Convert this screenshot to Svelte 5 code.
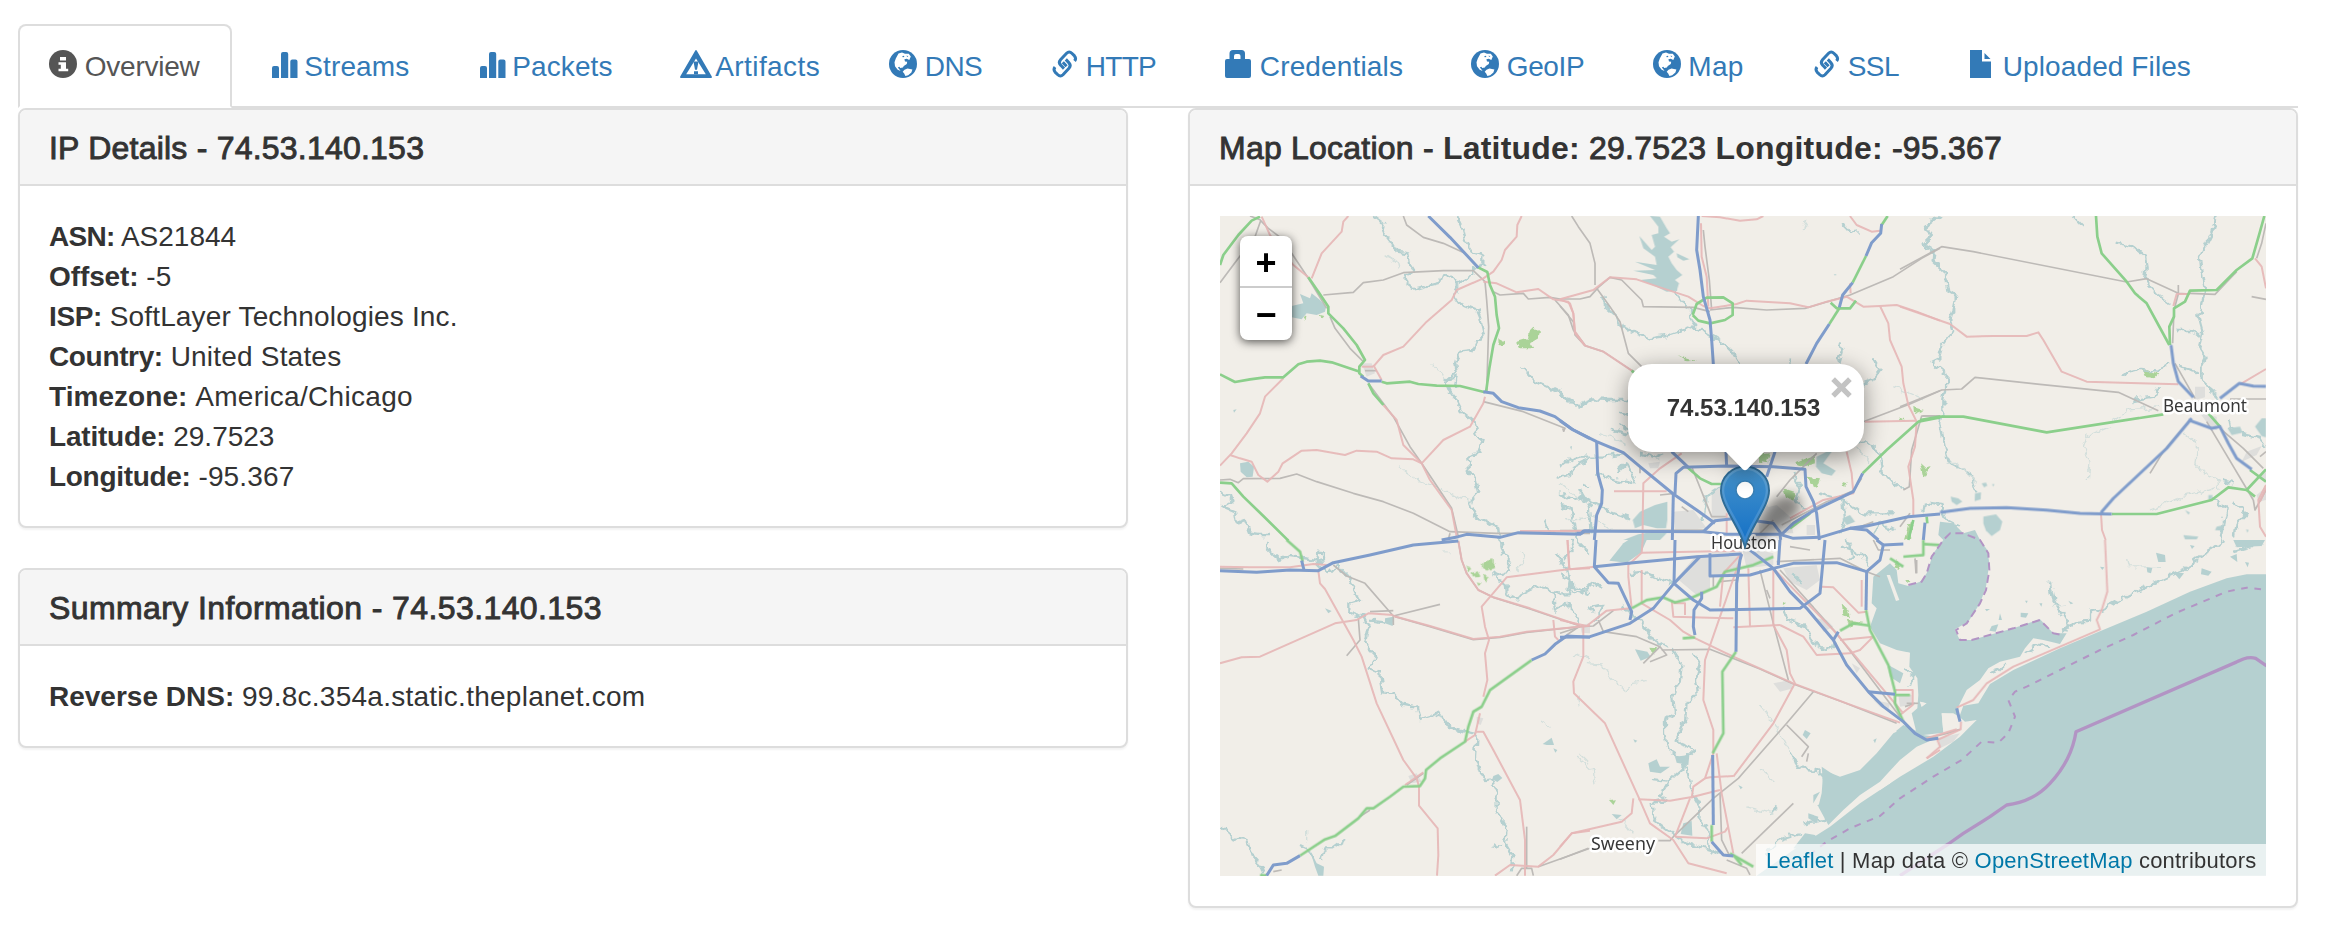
<script>
  const tabs = [
    { icon: 'info', label: 'Overview', width: 214, spacing: -0.25, active: true },
    { icon: 'stats', label: 'Streams', width: 204, spacing: 0.1 },
    { icon: 'stats', label: 'Packets', width: 199, spacing: 0.1 },
    { icon: 'warning', label: 'Artifacts', width: 205.5, spacing: 0.4 },
    { icon: 'globe', label: 'DNS', width: 157, spacing: -0.6 },
    { icon: 'link', label: 'HTTP', width: 170, spacing: -0.7 },
    { icon: 'lock', label: 'Credentials', width: 243, spacing: 0.15 },
    { icon: 'globe', label: 'GeoIP', width: 177.5, spacing: -0.4 },
    { icon: 'globe', label: 'Map', width: 155.5, spacing: 0.3 },
    { icon: 'link', label: 'SSL', width: 151, spacing: -0.6 },
    { icon: 'file', label: 'Uploaded Files', width: 290, spacing: 0.1 },
  ];

  // name, value, letter spacing of the name, letter spacing of the value
  const details = [
    ['ASN:', 'AS21844', -0.7, 0],
    ['Offset:', '-5', -0.1, 0],
    ['ISP:', 'SoftLayer Technologies Inc.', -0.4, 0.17],
    ['Country:', 'United States', -0.35, 0.2],
    ['Timezone:', 'America/Chicago', 0.05, 0.3],
    ['Latitude:', '29.7523', -0.2, 0],
    ['Longitude:', '-95.367', -0.3, 0.15],
  ];

  // Map geometry is split in tiles; each tile has its own origin and a 3x grid.
  const origin = { A: [1210, 200], B: [1560, 200], C: [1900, 200], D: [1210, 540], E: [1560, 540], F: [1900, 540] };
  const at = (t) => `translate(${origin[t][0]} ${origin[t][1]}) scale(.33333)`;

  const urban = {
    A: ['455,490 485,490 495,520 470,530'],
    B: ['340,935 400,930 440,985 345,992', '455,870 500,850 600,860 640,960 455,960', '590,930 650,915 690,950 700,1000 600,1000', '740,975 765,975 765,1005 740,1005', '265,790 300,785 295,805 270,805'],
    C: ['885,560 915,560 915,592 885,600', '900,640 950,650 950,690 930,680', '1040,755 1085,738 1070,765 1025,785', '1075,830 1098,815 1098,845', '1070,885 1098,860 1098,900 1075,905'],
    D: ['595,708 620,700 635,725 605,730', '800,530 820,535 812,555 800,550', '1110,255 1140,250 1140,280 1115,278'],
    E: ['350,115 410,45 450,50 450,150 410,165', '455,35 545,35 530,105 455,105', '545,20 640,40 640,75 560,85', '670,85 770,75 780,120 740,150 690,125', '640,430 690,420 700,445 660,455', '940,480 990,490 985,510 960,500', '1015,465 1055,465 1055,495 1020,500', '770,235 800,240 820,260 790,275', '875,370 900,385 890,400'],
    F: ['115,595 180,580 160,605 120,625'],
  };

  const wood = {
    A: ['920,425 955,415 955,395 970,380 990,398 985,415 960,430 970,445 930,445', '865,415 885,425 880,437 866,435', '320,340 340,345 335,352', '280,352 290,345 286,362'],
    B: ['705,790 760,768 765,790 730,800', '670,868 708,880 700,902 678,890', '740,830 780,835 770,862 750,850', '590,765 630,760 620,790 600,785', '1080,790 1095,803 1112,798 1090,835 1085,812', '1060,620 1092,630 1062,642', '845,845 860,850 850,860', '1018,652 1035,660 1022,662', '350,465 385,478 415,482 380,484'],
    C: ['725,508 750,513 775,520 760,535 735,530', '25,975 45,960 30,1015 12,1020'],
    D: ['820,65 850,58 855,85 830,92 815,80', '785,100 802,93 812,110 788,112', '820,105 840,110 825,128', '770,80 785,85 775,95', '800,125 815,128 805,138'],
    E: ['268,320 295,322 280,348', '150,780 168,778 160,792', '845,190 865,210 870,235 850,225', '1010,60 1020,90 1000,85', '670,185 680,190 672,195', '860,240 910,245 870,262'],
    F: ['15,120 32,120 28,130'],
  };

  const water = {
    A: ['245,318 280,310 270,282 300,295 305,280 330,300 348,320 345,335 320,345 290,340 275,358 245,352', '90,790 115,785 132,800 128,830 110,832 92,815', '70,630 80,628 72,638', '1080,740 1086,738 1084,750'],
    B: ['270,48 300,50 320,85 330,100 312,110 335,125 358,118 332,142 342,155 325,170 335,190 350,210 367,225 345,240 357,250 350,272 320,275 285,258 240,240 290,235 280,225 220,212 285,210 225,185 290,195 285,170 250,145 238,108 275,150 285,140 275,105 295,100 295,80', '350,160 388,178 370,182 352,172', '770,770 800,755 815,755 790,790 827,812 815,827 785,820 768,800', '240,935 285,915 322,905 322,960 318,985 290,985 250,975 225,985 218,960', '235,1003 280,995 320,1000 300,1020 190,1020', '848,955 870,945 885,965 860,975', '822,222 828,222 826,228'],
    C: ['1065,680 1085,655 1098,655 1098,712 1085,708', '250,950 288,943 307,965 300,990 275,1008 258,992 250,970', '152,890 175,895 187,905 170,915 155,905', '225,880 243,877 242,898 224,903', '245,850 258,848 262,857 252,862', '276,852 283,852 280,860', '983,685 1020,680 1028,698 995,705', '855,930 870,938 865,944', '950,980 972,975 965,992 945,990', '925,885 938,885 934,900 925,898', '850,1005 895,1010 890,1018 855,1018', '1038,988 1046,990 1042,998'],
    D: ['300,930 320,970 342,980 340,1007 325,1007 315,980', '525,235 550,230 548,258 525,250', '850,708 865,702 877,714 862,726 847,718', '998,612 1025,593 1032,615 1010,615', '1030,625 1042,630 1036,638', '345,205 365,213 355,220'],
    E: ['148,62 190,10 205,0 260,0 243,38 200,68', '265,670 290,658 300,680 330,680 302,700 270,695', '345,650 388,645 385,675 350,668', '370,850 395,843 397,887 362,882', '225,328 262,335 272,350 242,362', '735,570 752,580 740,597 728,585', '785,680 830,710 860,715 840,750 790,740', '745,820 775,830 770,850 745,835', '700,925 735,880 765,885 775,900 735,930', '535,735 548,742 542,748', '155,822 185,825 170,838', '220,598 232,602 225,608', '985,375 1030,400 1020,430 990,410', '940,600 950,595 945,610', '760,765 780,755 760,790'],
    F: [
      '-10,90 -30,70 -80,110 -85,190 -70,205 -90,260 -60,310 -10,330 30,338 28,380 52,415 55,465 52,505 35,520 48,572 10,555 -20,580 -70,640 -120,690 -180,710 -230,690 -235,760 -245,800 -215,855 -170,810 -120,765 -60,725 0,660 50,620 115,592 70,585 130,578 125,520 160,520 178,530 175,500 200,450 240,420 265,385 300,365 360,350 375,325 400,295 430,300 480,312 500,280 460,280 420,238 340,265 215,300 180,300 165,268 205,245 240,190 258,140 268,70 262,30 240,0 225,-30 190,-20 160,-50 120,-55 115,-15 130,0 100,40 80,100 60,125 25,138 -5,130',
      '1098,103 1040,103 980,115 870,155 740,215 600,274 480,325 340,390 270,432 235,490 190,497 178,530 195,545 230,540 180,590 100,650 0,710 -120,790 -210,860 -320,930 -430,1007 1098,1007',
      '768,38 795,45 797,66 775,66', '740,82 757,84 753,100 742,97', '905,85 935,95 925,107 903,103', '820,95 852,100 838,118', '1000,0 1095,0 1085,18 1010,22', '990,50 1010,42 1012,66', '1035,66 1047,68 1043,82', '275,258 295,253 287,275 268,272', '362,218 385,220 378,233 362,231', '300,220 306,240 296,240', '870,15 884,18 876,27', '375,182 383,182 380,190', '418,190 427,190 424,200', '255,207 270,207 260,214', '600,80 613,82 607,90', '505,182 520,190 512,193',
    ],
  };

  const islands = {
    E: ['980,105 990,105 1018,180 1008,183', '1080,485 1098,490 1085,500', '1000,560 1010,575 998,580'],
    F: ['0,335 28,338 12,372 2,350', '125,520 160,522 175,545 178,565 130,575', '60,485 80,490 65,500', '-60,750 -30,730 0,700 -40,715 -80,745', '165,270 185,275 200,300 180,300'],
  };

  const rivers = {
    A: ['490,48 520,70 515,90 545,130 560,155 595,160 600,190 612,210 580,225 590,250 615,268 650,258 690,248 700,220 730,235 745,255 735,290 750,310 800,330 810,355 820,400 800,430 790,450 745,455 735,490 740,515 705,545 715,570 740,600 760,640 790,665 800,700 815,720 805,760 775,770 780,800 770,810 795,840 805,880 780,910 795,945 830,965 865,985 868,1020', '740,48 760,90 770,130 790,160 820,170 820,195 790,205 790,225 745,250', '938,502 975,545 1040,575 1080,600 1105,620 1140,605', '1140,775 1090,800 1080,825 1040,830', '1050,915 1080,920 1095,980', '30,878 60,890 65,905 40,920 75,935 80,970 105,960 120,1000 150,1005 180,1005', '1000,955 1010,985 1030,1000', '1115,855 1140,860', '1110,880 1125,905 1140,905', '705,545 740,530 735,560'],
    B: ['130,290 135,315 175,350 185,380 220,395 270,415 320,408 400,380 440,400 490,430 520,460 540,492', '340,270 370,310 390,320 390,350 410,380', '0,572 30,610 60,612 100,598 150,600 205,600', '1140,50 1095,85 1115,105 1090,130 1125,150 1120,180 1140,200', '850,75 870,98 893,95', '838,430 845,450 835,485', '940,475 962,510 940,540 915,550', '900,720 940,735 960,765 965,810 1000,850 1040,870', '0,800 30,780 60,770 130,770 190,760', '0,880 40,900 60,890 150,935 210,955', '115,820 170,840 220,850', '60,870 90,920 95,1000', '700,820 720,860 710,900 740,930', '480,860 440,890 430,960', '780,880 850,900 900,940 1000,940', '180,635 205,645', '180,675 205,690', '150,690 205,705', '850,900 855,960 840,1000', '940,1000 960,970 1000,990', '0,915 30,930 45,970 50,1020', '240,760 290,775 310,765', '230,850 200,790 170,820', '690,475 688,492'],
    C: ['120,48 75,80 95,105 65,135 100,155 98,185 130,215 140,240 145,270 170,285 160,330 150,365 160,395 125,440 115,475 95,485 140,520 138,560 130,600 130,640 120,670 130,720 140,770 150,790 210,820 230,880', '950,48 935,100 900,170 905,220 915,270 905,320 895,345 910,400 900,440 920,470 905,500 905,545 940,575 955,600', '650,128 700,140 735,170 740,200 735,240 770,280 810,310', '830,390 870,390 900,410', '835,500 895,515', '810,490 770,515 720,510 665,525', '780,560 760,590 700,600', '985,655 990,680 1020,700 1080,715 1098,740', '935,890 980,930 960,1020', '70,940 75,910 120,915 140,960 180,980', '520,48 545,75', '1000,900 1040,940 1010,970 1005,1010', '965,840 1000,850'],
    D: ['175,0 165,20 190,45 205,58 240,48 320,60 325,38 345,40 345,60 320,65 340,85 350,105 380,75 415,115 450,185 415,195 415,215 460,230 475,260 465,310 500,350 475,385 510,400 520,460 550,465 570,490 620,500 630,540 690,520 715,560 760,575 800,585 795,650 810,700 860,740 860,810 890,870 885,910 910,950 905,1000', '870,0 880,40 900,70 895,95 850,105 860,120 885,125 890,160 920,172 960,150 1000,135 1030,160 1080,160 1090,140 1140,160', '1040,45 1075,90 1085,150', '1030,160 1035,215 1060,185 1090,210 1110,250', '30,858 70,895 110,900 130,950 150,975 160,1007', '405,900 370,925 345,925 335,960', '270,915 300,930 310,960', '1100,0 1140,40', '480,245 525,250', '850,915 870,920'],
    E: ['340,330 365,370 360,420 340,470 345,520 315,540 315,580 325,630 370,660 375,680 330,720 300,770 320,780 275,790 280,840 340,885 380,910 450,930 480,945', '400,340 420,370 405,420 410,460 380,490 375,540 350,600 400,635 370,660', '380,680 390,740 420,790 415,830 445,870 450,930', '0,100 30,120 25,150 60,160 100,125 130,140', '100,220 90,200 130,195 120,220 100,245', '185,200 240,240 270,290 320,320', '690,640 720,685 770,690 800,720', '670,200 680,240 740,260 760,310 800,330 830,310', '210,105 260,100 330,130', '30,0 35,30 10,60', '275,720 320,725', '630,820 650,800', '860,0 880,50 860,60', '770,790 800,820 790,840 730,850', '840,20 900,40 930,80', '620,940 660,900 720,880', '700,100 730,130'],
    F: ['450,130 460,180 510,265', '970,0 850,90 720,150 600,210 570,215 570,245 520,250 490,275', '1000,30 1040,20 1090,10', '375,340 420,310 450,320', '10,390 40,410 30,440', '270,400 300,390 320,370'],
  };

  const streams = {
    A: ['530,170 560,190 565,210', '570,800 620,840 680,860', '690,865 740,890 790,905', '665,490 690,520 710,545'],
    B: ['740,60 730,90', '890,740 930,790', '640,770 620,790', '550,860 540,900', '0,850 60,900', '120,700 200,730', '1000,560 1090,600', '20,960 100,950 160,990'],
    C: ['855,700 890,730 885,790 900,810 955,840 960,870', '630,680 560,710 550,740 570,790 565,840', '780,620 690,630 640,665', '750,930 850,890 950,860', '140,790 170,790 230,850'],
    D: ['940,30 945,60 920,90', '1095,345 1140,360', '700,25 715,40', '990,540 1020,565', '1110,640 1140,670', '290,870 290,910'],
    E: ['75,370 130,375 150,410 200,455 220,430 260,425', '600,495 640,550 670,600 690,640', '50,650 100,690 105,730', '180,830 220,880', '560,800 640,820', '600,690 640,720', '55,470 60,500'],
    F: ['680,60 685,80 780,82', '440,120 450,130', '460,200 495,195', '130,495 60,470'],
  };

  const rail = {
    A: ['30,248 85,175 135,110 152,62 175,85 215,115 295,235 350,325', '340,285 430,277 460,248 520,240 580,218 700,212 790,212 825,245 830,300 836,380 830,575', '580,48 590,75 640,112 700,130 765,160', '360,350 375,385 420,445 460,485', '850,275 870,285 940,280 955,297 1020,292 1050,297', '1035,300 1075,345 1090,390 1125,435', '820,605 940,635 1065,685 1060,695', '475,550 550,650 600,740 635,790 725,925 745,1010', '30,840 60,838 85,848 100,836 210,835 260,822 320,845 430,880 520,905 610,940 720,995 860,1000 1140,1000', '120,48 152,60', '465,512 500,512', '720,1000 715,1018'],
    B: ['35,48 55,80 90,130 105,190 105,255', '0,297 60,297 90,290 115,262 150,232 185,240 245,300 250,320 400,322 450,335', '110,265 150,320 180,365 205,460 245,500', '430,90 435,140 448,240 455,330', '450,330 520,322 620,330 735,325 870,285 1000,230 1085,175 1140,145', '0,318 40,365 45,405 75,437 130,455 220,515', '910,665 1050,612 1140,572', '1140,648 1085,648 1070,700 1055,750 1048,860 1030,870', '395,800 455,950 500,950', '770,760 690,840 650,890', '665,975 800,905 880,872 905,835', '240,800 240,820', '365,920 385,935', '600,1000 640,960', '900,980 940,965', '300,885 345,880', '8,685 12,695', '0,992 430,990'],
    C: ['0,208 125,140 220,155 680,246 740,236 835,280 870,282', '835,255 835,282 822,330 818,430', '0,620 125,570 185,567 225,532 420,553 655,577 775,632', '870,280 945,283 1010,215', '1098,70 1085,130 1070,175', '1055,290 1098,298', '825,490 885,595', '990,597 1098,597', '870,660 790,755 750,820', '920,665 1060,900', '960,685 1030,745 1090,805', '67,648 120,648', '0,980 30,940', '1060,900 1065,930 1098,870', '1080,770 1098,755'],
    D: ['370,75 410,108 465,130 550,228 690,193', '480,215 550,212', '445,235 450,300 410,347', '550,228 550,255', '985,980 1140,925', '950,860 950,985', '920,1007 935,985 965,985 970,1007', '1070,285 1110,258', '555,230 660,260 790,299 870,292 950,277 1110,260', '745,3 755,60 770,100 805,150 850,172 960,207 1110,258', '590,735 640,700', '190,995 215,990', '450,830 480,810', '30,85 100,87'],
    E: ['600,90 625,190 640,250 685,420', '115,240 130,275 230,290 300,320 250,370', '305,330 450,328 600,387 700,432 850,487 1010,550', '760,455 680,550 535,715 460,775 340,890 330,902 295,902', '680,555 745,620 725,650', '745,640 740,665', '700,790 545,940', '480,760 485,900 510,950', '0,958 85,925', '650,65 840,55 920,95 960,110', '660,90 830,280 1020,530', '0,280 60,260 100,258 160,212', '460,110 460,140', '620,150 630,175', '1070,60 1070,100', '940,0 955,30 990,30', '500,960 560,985 570,1005', '1040,490 1075,490', '270,365 320,345 300,320', '690,20 750,30', '480,125 530,120'],
    F: ['80,595 140,580 180,568', '45,55 48,100', '15,500 45,490'],
  };

  const primary = {
    A: ['155,50 180,105 250,195 295,232', '415,48 400,65 395,95 335,160 305,235', '935,48 922,75 920,110 885,150 875,180 850,215 820,235 740,270 725,300 650,365 580,440 520,465 490,500', '820,245 860,250 920,277 985,267 1030,298 1075,305 1090,340 1095,400 1125,437', '490,495 515,540', '220,535 165,590 150,640 110,700 65,760 30,797', '60,765 90,775 125,785 145,825 172,845 205,815 218,790 275,752 320,750 405,765 440,752 500,755 545,775 610,778 635,790 700,720 780,680 820,610 825,590', '520,615 560,660 580,735 635,790', '635,790 660,840 725,930 740,1010', '455,500 490,500', '930,993 1140,993'],
    B: ['425,48 480,52 540,62 590,58 610,48', '870,48 890,75 935,95 960,92', '0,298 100,270 150,232 230,238 300,262 385,290 430,318 450,325 530,312 560,302 690,310 745,322 800,305 860,290 910,320 960,318 1010,315 1070,335 1140,362', '960,318 985,370 990,420 1025,500 1030,550 1045,615 1070,665 1065,740 1045,800 1060,900 1060,950', '0,298 30,310 40,340 45,395 75,437 130,455 220,515', '423,70 425,170 440,230 445,320', '915,665 1070,662', '162,874 320,874', '365,760 300,805 250,850 248,960 248,1020', '860,755 875,820 880,880 790,900 690,955', '870,250 872,280', '500,940 500,1000'],
    C: ['0,320 150,372 200,410 280,408 380,408 415,397 430,420 485,515 560,545 720,550 835,553', '603,940 606,990 617,1020', '870,282 830,282 820,318', '1065,175 1085,200 1098,265', '1020,553 1098,507', '1098,855 1075,900 1080,980 1098,1010', '1098,865 1080,905'],
    D: ['30,80 120,82 240,82 310,72 350,75', '30,370 95,352 150,350 375,250 440,240 475,220 550,225', '325,92 330,130 345,147 430,300 455,350 500,490 580,660 620,715 627,740 627,797 683,865 685,945 681,1007', '745,3 755,60 770,100 805,150 850,172 960,205 1110,257', '550,228 660,258 790,297 870,290 950,275 1140,257', '1140,85 1075,88 890,112 815,200 825,260 837,300 825,340 832,420 820,470', '1072,0 1078,85', '1030,240 1035,290 1045,300', '795,575 820,575 850,630 930,780 945,900 945,1007', '855,1007 900,975 985,980 1030,945 1085,880 1140,872', '765,605 795,585 810,520', '585,735 640,697'],
    E: ['245,38 545,32', '545,45 480,230 435,360 430,480 460,570 460,640 435,715 400,740 395,775', '248,0 245,38 205,75 205,110 215,205', '105,80 30,88', '23,0 28,88', '0,240 80,258 140,212 210,205', '245,90 245,190 330,240 370,275 400,292 520,350 700,430 860,490 1020,548', '565,85 570,258', '520,262 660,255', '640,85 640,255 680,330 690,400 705,430 640,550 520,710', '660,255 730,290 770,345 870,340 900,330 940,290 840,300', '335,180 340,230 520,235', '340,190 375,190 375,225', '70,258 70,350 40,425 42,460 135,550 235,770 270,850 340,900 385,970 500,1000', '235,778 330,782 400,770 480,750', '220,775 215,820 185,845 120,860 35,880 0,920', '345,890 440,895 495,875 505,860', '345,890 390,775', '470,640 485,760 520,940', '640,85 820,270 1030,520', '785,140 820,142 895,218 920,215', '1005,450 1058,450 1058,495 1020,525', '1100,655 1140,630', '545,40 490,100 480,200', '435,715 450,712 520,708', '905,120 905,200'],
    F: ['615,0 622,155 605,210 590,240 600,268 480,320 340,380 260,430 220,480 170,503', '80,655 120,620 112,600 182,568 183,545', '80,595 170,568'],
  };

  const trunk = {
    A: ['30,195 40,165 85,105 125,62 150,50', '295,232 325,275 355,320 355,340 400,385 440,435 465,480 448,500 448,520 460,530', '30,523 75,546 120,538 165,532 220,532 265,493 290,485 330,482 365,487 445,514', '515,545 530,550 600,545 625,552 680,557 750,558 825,577', '475,550 490,580 520,615', '800,200 832,216 840,255 855,290 860,345 867,385 850,435 838,505 828,577', '30,848 65,850 100,890 160,948 235,1022'],
    B: ['983,48 965,75', '918,168 878,248', '838,325 808,372', '398,345 410,312 440,293 490,292 518,310 518,345 495,360 450,370 415,362 398,345', '812,308 830,325 870,325 888,302', '380,800 420,835 455,852 490,852', '908,820 980,750 1075,665 1140,652', '1060,960 1045,1020', '1100,950 1102,970', '215,512 250,540', '690,985 750,940'],
    C: ['588,48 592,110 605,160 680,245 705,280 740,310 808,435', '1093,48 1080,95 1057,175 1010,210 950,270 870,272 855,305 822,325 822,350 808,380 810,435', '60,660 120,650 190,650 440,697 790,643', '635,942 770,942 935,900 985,862 1040,870 1098,808', '1050,810 1098,845', '1040,870 1065,890', '925,640 960,680'],
    D: ['230,0 270,35 278,65', '270,947 345,898 375,888 445,835 470,805 490,805 540,770 580,740 630,738 645,715 648,690 690,655 765,605 775,560 790,515 815,500 840,450 965,360', '150,1006 170,1006'],
    E: ['215,205 260,180 310,172 345,187 390,175 470,140 495,95 580,75 640,50', '528,335 487,395 490,580 458,640', '455,855 455,905', '510,940 580,980', '918,210 930,270 985,375 1005,455 1005,490 1030,545', '840,272 880,250 930,257', '368,295 405,292', '1090,0 1090,45 1030,50', '1005,465 1050,465', '520,945 545,975', '990,55 1030,80', '1090,12 1140,15'],
    F: [],
  };

  const motorway = {
    A: ['655,48 720,112 805,203', '452,528 475,543 515,543', '820,575 850,580 875,605 925,623 990,633 1035,650 1085,687 1140,716', '695,1020 745,1010 770,1003 870,1012 925,998 1110,1003 1120,993 1140,993'],
    B: ['415,48 410,150 420,210 430,290 450,360 455,420 460,492', '965,72 962,100 935,128 918,168', '878,248 848,285 838,322', '808,372 770,430 738,492', '0,662 40,690 110,725 190,758 240,800 340,882 410,930 465,970', '110,725 113,820 127,870 125,910 110,945 103,1020', '345,882 348,820 370,802 500,798 640,800 735,808 738,860 760,905 770,940 778,1020', '498,755 500,800', '645,755 620,830', '335,755 385,802', '340,882 337,1020', '50,1000 65,1000 75,993 430,995 500,1003 660,1003', '430,995 465,962 530,955 640,970 665,1003', '665,1003 700,970 755,935 880,875 908,820', '660,1003 700,1015 780,1012 870,985 920,978 1045,950 1140,942', '870,985 920,990 955,1020', '1095,968 1090,1020', '660,1003 662,1020'],
    C: ['813,435 820,490 835,545 880,592', '960,595 1018,550 1060,558 1098,559', '875,655 800,745 640,895 603,938', '865,660 935,685 960,680 985,730 1010,775 1055,808', '120,937 210,925 320,923 440,930 540,940 635,942'],
    D: ['30,92 140,97 240,90 325,92 370,68 480,45 610,15 745,3', '275,62 282,90', '170,1007 190,975 230,970 270,947', '965,360 1005,342 1035,313 1070,288 1140,292'],
    E: ['108,0 103,80 145,128 175,130 215,215 210,240', '103,80 220,68 410,50 545,42', '345,0 342,130 400,180 450,210 720,205 780,160 795,0', '342,130 420,50', '450,40 450,108 570,105 640,85 700,70 830,68 920,95 960,60 970,15 1030,12', '0,292 90,290 210,250 280,205 342,130', '545,42 540,60 530,130 528,335', '425,155 425,175 402,210 400,260 405,285', '570,30 640,85 690,155 740,205 820,300 860,375 925,455 970,500 1030,545 1065,580 1100,600 1135,595', '920,95 918,210', '925,455 1005,463', '820,300 835,275', '660,0 655,75', '458,645 460,855', '455,905 490,945 520,948', '950,0 970,15'],
    F: ['170,505 180,545'],
  };

  const roadLayers = [
    { kind: 'rail', data: rail },
    { kind: 'primary', data: primary },
    { kind: 'trunk', data: trunk },
    { kind: 'motorway', data: motorway },
  ];
</script>

{#snippet icon(name)}
  <svg class="icon" viewBox="0 0 28 28" fill="currentColor" aria-hidden="true">
    {#if name === 'info'}
      <circle cx="14" cy="14" r="14" />
      <path fill="#fff" d="M11 7h6v3.500h-6zM9.500 12.200h7.500v6.600h2.200v2.500H9.500v-2.500h2.300v-4H9.500z" />
    {:else if name === 'stats'}
      <path d="M3 28V18q0-2 2-2h3q2 0 2 2v10zM12 28V4q0-2 2-2h3.200q2 0 2 2v24zM21.300 28V11.500q0-2 2-2h3.200q2 0 2 2V28z" />
    {:else if name === 'warning'}
      <path fill-rule="evenodd" d="M15 1q1-2 2 0l14.800 25.500q.7 1.500-1 1.500H1.200q-1.700 0-1-1.500zM16 8.500 6.200 24.200h19.600z" />
      <path d="M13.500 11.500h5L17 19.800h-2zM14 21.200h4v3h-4z" />
    {:else if name === 'globe'}
      <circle cx="14" cy="14" r="14" />
      <path fill="#fff" d="M9.500 3.600 13 2.500l3 1.200 3.800.1 2 2.700-1.500 3.400-2.500-1.100-2.400.4.6 2.200 2.200.3-.4 2.300-3 1.900-.9 1.700-2.700.4-.8-1.200-1.600.8 1.500 1.600 1.300 1.800-2.900-1.200-2.700-3.500-.5-4.100 1.300-3.600zM15.500 19.800l3-1.300 4.900.9-1 3.200-3.200 2.700-2.800.7-1.200-2.400-1.500-1.900z" />
      <path d="M13.200 6.200l1.800-.5.3 1.300-1.500.3zM17.300 5.700l2 .4-.8 1z" />
    {:else if name === 'link'}
      <g fill="none" stroke="currentColor" stroke-width="3">
        <path d="M12.800 12.200 16.600 16.200M14 18.600 10.800 15.300Q8 12.600 10.500 9.800L16.600 3.200Q19.200.6 21.800 3.200L24.500 5.900Q26.600 8.300 24.600 11" />
        <path d="M15.800 9.400 18.800 12.600Q21.500 15.400 19 18.200L13 24.800Q10.400 27.400 7.800 24.800L5.100 22.100Q3 19.700 5 17" />
      </g>
    {:else if name === 'lock'}
      <path fill-rule="evenodd" d="M5.500 9V3.500Q5.500 0 9 0h8.500Q21 0 21 3.500V9h4q2 0 2 2v15q0 2-2 2H3q-2 0-2-2V11q0-2 2-2zM10 9h6.500V6q0-2-2-2H12q-2 0-2 2z" />
    {:else if name === 'file'}
      <path d="M3 0h12v11.500h9V28H3zM17.500 3 23.500 9h-6z" />
    {/if}
  </svg>
{/snippet}

<main>
  <nav>
    {#each tabs as tab}
      <a class:active={tab.active} style="width: {tab.width}px" href="#{tab.label}">
        {@render icon(tab.icon)}
        <span style="letter-spacing: {tab.spacing}px">{tab.label}</span>
      </a>
    {/each}
  </nav>

  <div class="columns">
    <div class="column">
      <section class="panel">
        <h3>IP Details - 74.53.140.153</h3>
        <div class="body">
          {#each details as [name, value, nameSpacing, valueSpacing]}
            <div class="row"><b style="letter-spacing: {nameSpacing}px">{name}</b> <span style="letter-spacing: {valueSpacing}px">{value}</span></div>
          {/each}
        </div>
      </section>
      <section class="panel">
        <h3 class="summary">Summary Information - 74.53.140.153</h3>
        <div class="body">
          <div class="row"><b>Reverse DNS:</b> <span class="host">99.8c.354a.static.theplanet.com</span></div>
        </div>
      </section>
    </div>

    <section class="panel">
      <h3>Map Location - <b>Latitude:</b> 29.7523 <b>Longitude:</b> -95.367</h3>
      <div class="body map-body">
        <div class="map">
          <svg class="tiles" viewBox="1220 216 1046 660">
            <defs>
              <filter id="meander" filterUnits="userSpaceOnUse" x="1220" y="216" width="1046" height="660">
                <feTurbulence type="fractalNoise" baseFrequency="0.13" numOctaves="2" seed="4" />
                <feDisplacementMap in="SourceGraphic" scale="9" xChannelSelector="R" yChannelSelector="G" />
              </filter>
              <filter id="coast" filterUnits="userSpaceOnUse" x="1220" y="216" width="1060" height="670">
                <feTurbulence type="fractalNoise" baseFrequency="0.16" numOctaves="2" seed="9" />
                <feDisplacementMap in="SourceGraphic" scale="5" xChannelSelector="R" yChannelSelector="G" />
              </filter>
              <filter id="soft" x="-50%" y="-50%" width="200%" height="200%"><feGaussianBlur stdDeviation="6" /></filter>
              <linearGradient id="pin" x1="0" y1="0" x2="0" y2="1">
                <stop offset="0" stop-color="#4693cb" />
                <stop offset="1" stop-color="#126fc6" />
              </linearGradient>
            </defs>
            <rect x="1220" y="216" width="1046" height="660" fill="#f1eee8" />
            {#each Object.entries(urban) as [tile, shapes]}
              <g transform={at(tile)} class="urban">{#each shapes as points}<polygon {points} />{/each}</g>
            {/each}
            <g filter="url(#coast)">
              {#each Object.entries(wood) as [tile, shapes]}
                <g transform={at(tile)} class="wood">{#each shapes as points}<polygon {points} />{/each}</g>
              {/each}
            </g>
            <g filter="url(#meander)">
              {#each Object.entries(rivers) as [tile, lines]}
                <g transform={at(tile)} class="river">{#each lines as points}<polyline {points} />{/each}</g>
              {/each}
              {#each Object.entries(streams) as [tile, lines]}
                <g transform={at(tile)} class="stream">{#each lines as points}<polyline {points} />{/each}</g>
              {/each}
            </g>
            <g>
              {#each Object.entries(water) as [tile, shapes]}
                <g transform={at(tile)} class="water">{#each shapes as points}<polygon {points} />{/each}</g>
              {/each}
              {#each Object.entries(islands) as [tile, shapes]}
                <g transform={at(tile)} class="land">{#each shapes as points}<polygon {points} />{/each}</g>
              {/each}
            </g>
            {#each roadLayers as layer}
              {#each Object.entries(layer.data) as [tile, lines]}
                <g transform={at(tile)} class={layer.kind}>{#each lines as points}<polyline {points} />{/each}</g>
              {/each}
            {/each}
            <g transform={at('F')} class="border">
              <path class="solid" d="M0 1007 145 912 190 880 270 830 320 795Q400 785 450 730 515 660 528 575L1030 357Q1050 350 1067 355L1100 378" />
              <path class="dash" d="M1083 148 1040 143 980 155 830 218 700 285 600 330 480 390 380 440 345 455 325 480 345 530 325 580 295 608 245 605 185 660 100 710 0 775-60 828-150 865-220 905-330 990" />
              <path class="shore" d="M25 135 65 125 80 100 95 50 130 0 150-20 190-20 240 0 265 40 268 90 258 150 240 190 200 250 168 270 180 300 215 300 340 265 420 240 460 280 485 285" />
            </g>
            <g class="place">
              <text x="2163" y="412" textLength="84" lengthAdjust="spacingAndGlyphs">Beaumont</text>
              <text x="1711" y="549" textLength="66" lengthAdjust="spacingAndGlyphs">Houston</text>
              <text x="1591" y="849.500" textLength="64" lengthAdjust="spacingAndGlyphs">Sweeny</text>
            </g>
            <path d="M1745 548 1764 512Q1776 490 1796 496 1808 506 1788 524Z" fill="#000" opacity=".45" filter="url(#soft)" />
            <path d="M1745 546.500C1739 526 1721 506 1721 490.500A24 24 0 0 1 1769 490.500C1769 506 1751 526 1745 546.500Z" fill="url(#pin)" stroke="#2e6c97" stroke-width="2" />
            <path d="M1745 541C1740 523 1723 505 1723 490.500A22 22 0 0 1 1767 490.500C1767 505 1750 523 1745 541Z" fill="none" stroke="#fff" stroke-opacity=".14" stroke-width="2.500" />
            <circle cx="1745" cy="490" r="9" fill="#fff" stroke="#3a80b5" stroke-width="1.500" />
          </svg>

          <div class="zoom">
            <a href="#in">+</a>
            <a href="#out">−</a>
          </div>

          <div class="popup">
            <b>74.53.140.153</b>
            <svg class="close" viewBox="0 0 20 20"><path d="M2 2 18 18M18 2 2 18" stroke="#c3c3c3" stroke-width="5" /></svg>
            <svg class="tip" viewBox="0 0 40 20"><path d="M0 0H40L22 18.500Q20 20 18 18.500Z" fill="#fff" /></svg>
          </div>

          <div class="attribution"><a href="#leaflet">Leaflet</a> | Map data © <a href="#osm">OpenStreetMap</a> contributors</div>
        </div>
      </div>
    </section>
  </div>
</main>

<style>
  :global(body) {
    margin: 0;
    background: #fff;
  }

  main {
    box-sizing: border-box;
    width: 2326px;
    height: 942px;
    padding: 24px 28px 0 18px;
    overflow: hidden;
    font: 28px/40px 'Liberation Sans', Arial, sans-serif;
    color: #333;
  }

  a {
    text-decoration: none;
  }

  nav {
    display: flex;
    gap: 4px;
    height: 82px;
    border-bottom: 2px solid #ddd;
  }

  nav a {
    display: flex;
    flex: none;
    gap: 7.800px;
    box-sizing: border-box;
    height: 84px;
    padding: 20px 30px;
    border: 2px solid transparent;
    border-radius: 8px 8px 0 0;
    color: #337ab7;
    white-space: nowrap;
  }

  nav a.active {
    padding-left: 29px;
    margin-right: 0.500px;
    color: #555;
    background: #fff;
    border-color: #ddd;
    border-bottom-color: transparent;
  }

  nav span {
    padding-top: 1px;
  }

  .icon {
    flex: none;
    width: 28px;
    height: 28px;
    margin-top: 4px;
    overflow: visible;
  }

  .columns {
    display: grid;
    grid-template-columns: 1110px 1110px;
    gap: 60px;
    align-items: start;
  }

  .column {
    display: grid;
    gap: 40px;
  }

  .panel {
    border: 2px solid #ddd;
    border-radius: 8px;
    background: #fff;
    box-shadow: 0 2px 2px rgba(0, 0, 0, 0.05);
  }

  h3 {
    margin: 0;
    padding: 21px 29px 19px;
    border-bottom: 2px solid #ddd;
    border-radius: 6px 6px 0 0;
    background: #f5f5f5;
    font-size: 32px;
    line-height: 34px;
    font-weight: 400;
    letter-spacing: 0.220px;
    white-space: nowrap;
    -webkit-text-stroke: 0.9px #333;
  }

  h3.summary {
    letter-spacing: 0.400px;
  }

  h3 b {
    -webkit-text-stroke: 0;
  }

  .body {
    padding: 31px 29px 29px;
  }

  .map-body {
    padding: 30px;
  }

  .row {
    height: 40px;
    white-space: nowrap;
  }

  .host {
    letter-spacing: 0.260px;
  }

  .map {
    position: relative;
    height: 660px;
    overflow: hidden;
  }

  .tiles {
    display: block;
    width: 1046px;
    height: 660px;
  }

  .urban { fill: #dededc; }
  .wood { fill: #aad398; }
  .water { fill: #b5d0d0; }
  .land { fill: #f1eee8; }

  polyline,
  .border path {
    fill: none;
    stroke-linejoin: round;
  }

  .river { stroke: #b5d0d0; stroke-width: 7; }
  .stream { stroke: #d3dfdc; stroke-width: 4; }
  .rail { stroke: #bdbab7; stroke-width: 5; }
  .primary { stroke: #e6b6b6; stroke-width: 6; opacity: 0.9; }
  .trunk { stroke: #8bcf8b; stroke-width: 8; }
  .motorway { stroke: #7f9ccb; stroke-width: 9; }
  .border { stroke: #b294c4; }
  .solid { stroke-width: 10; }
  .dash { stroke-width: 6; stroke-dasharray: 20 20; }
  .shore { stroke-width: 6; stroke-dasharray: 24 14; }

  .place text {
    font: 18.500px 'Noto Sans', sans-serif;
    fill: #383838;
    stroke: #fff;
    stroke-width: 5px;
    stroke-linejoin: round;
    paint-order: stroke;
  }

  .zoom {
    position: absolute;
    top: 20px;
    left: 20px;
    width: 52px;
    border-radius: 8px;
    background: #fff;
    box-shadow: 0 2px 10px rgba(0, 0, 0, 0.65);
  }

  .zoom a {
    display: block;
    height: 52px;
    color: #000;
    font: bold 36px/53px 'Liberation Sans', Arial, sans-serif;
    text-align: center;
  }

  .zoom a:first-child {
    height: 50px;
    border-bottom: 2px solid #ccc;
  }

  .popup {
    position: absolute;
    top: 148px;
    left: 408px;
    box-sizing: border-box;
    width: 236px;
    height: 88px;
    padding-right: 5px;
    border-radius: 24px;
    background: #fff;
    filter: drop-shadow(0 5px 11px rgba(0, 0, 0, 0.42));
    font-size: 24px;
    line-height: 88px;
    text-align: center;
  }

  .close {
    position: absolute;
    top: 13px;
    right: 12px;
    width: 21px;
    height: 21px;
  }

  .tip {
    position: absolute;
    top: 87px;
    left: 97px;
    width: 40px;
    height: 20px;
  }

  .attribution {
    position: absolute;
    right: 0;
    bottom: 0;
    box-sizing: border-box;
    width: 510px;
    padding: 1px 10px 0;
    background: rgba(255, 255, 255, 0.7);
    font-size: 22px;
    line-height: 31px;
    letter-spacing: 0.210px;
    text-align: right;
    white-space: nowrap;
  }

  .attribution a {
    color: #0078a8;
  }
</style>
